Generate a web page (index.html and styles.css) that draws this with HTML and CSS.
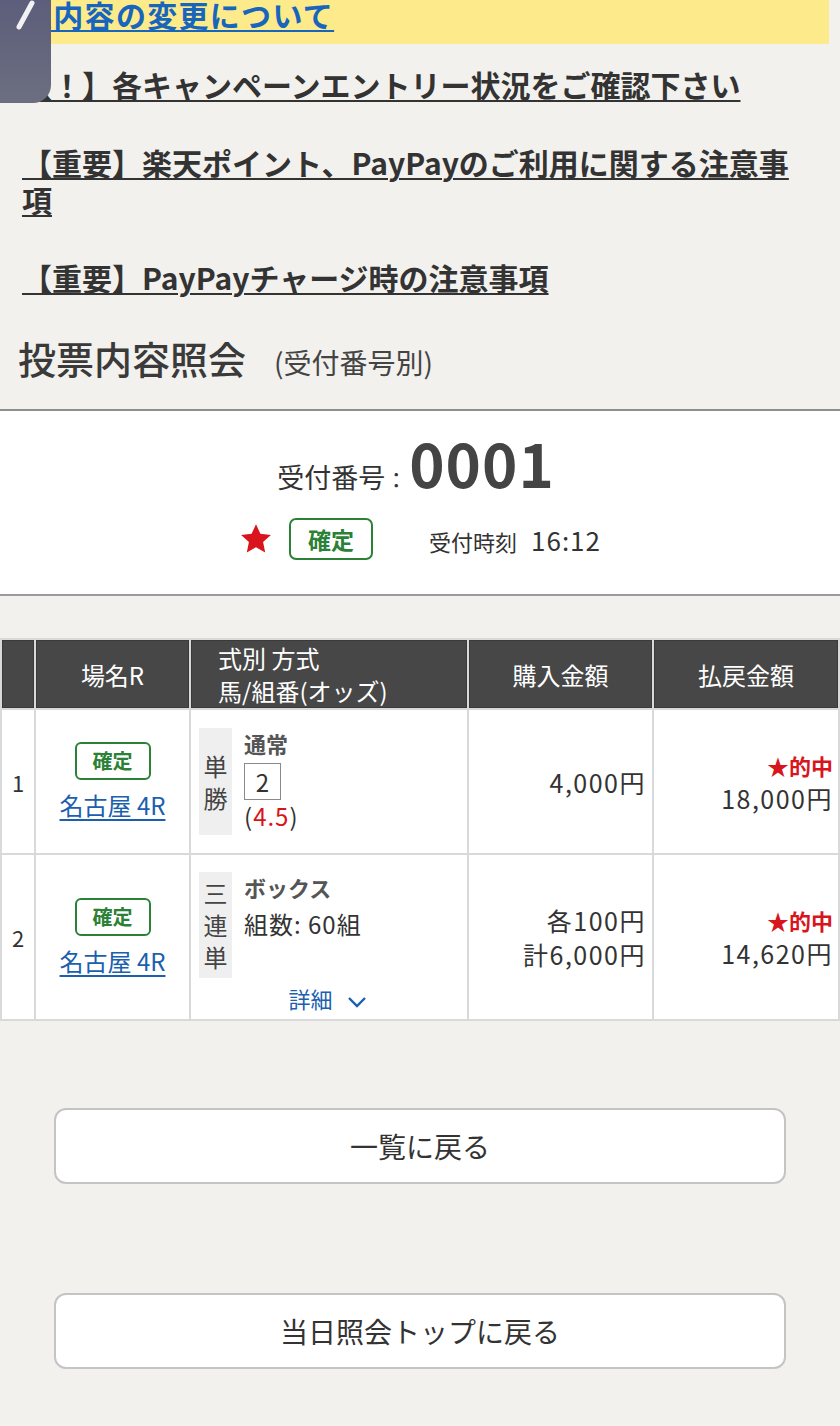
FILE: index.html
```html
<!DOCTYPE html>
<html lang="ja">

<head>
    <meta charset="UTF-8">
    <meta name="viewport" content="width=device-width, initial-scale=1.0">
    <title>投票内容照会</title>
    <link rel="stylesheet" href="styles.css">
</head>

<body>

    <div class="back-tab">
        <svg width="51" height="40" viewBox="0 0 51 40">
            <line x1="19" y1="27" x2="32" y2="3" stroke="#fff" stroke-width="5" stroke-linecap="round" opacity="0.92" />
        </svg>
    </div>

    <div class="notice-bar">
        <a href="#" class="notice-bar-link">入内容の変更について</a>
    </div>

    <div class="notices">
        <a href="#" class="notice">【！】各キャンペーンエントリー状況をご確認下さい</a>
        <a href="#" class="notice">【重要】楽天ポイント、PayPayのご利用に関する注意事項</a>
        <a href="#" class="notice">【重要】PayPayチャージ時の注意事項</a>
    </div>

    <h1 class="page-title">投票内容照会<span class="page-sub">(受付番号別)</span></h1>

    <div class="receipt">
        <div class="receipt-no">
            <span class="receipt-label">受付番号</span>
            <span class="receipt-colon">：</span>
            <span class="receipt-num">0001</span>
        </div>
        <div class="receipt-info">
            <svg class="big-star" width="34" height="34" viewBox="0 0 24 24">
                <polygon points="12,1.5 15.1,8.3 22.5,9.1 17,14.1 18.5,21.5 12,17.8 5.5,21.5 7,14.1 1.5,9.1 8.9,8.3" fill="#d8141c" />
            </svg>
            <span class="status-big">確定</span>
            <span class="receipt-time"><span class="time-label">受付時刻</span><span class="time-val">16:12</span></span>
        </div>
    </div>

    <table class="bets">
        <thead>
            <tr>
                <th class="col-no"></th>
                <th class="col-race">場名R</th>
                <th class="col-type">式別 方式<br>馬/組番(オッズ)</th>
                <th class="col-buy">購入金額</th>
                <th class="col-pay">払戻金額</th>
            </tr>
        </thead>
        <tbody>
            <tr class="row-1">
                <td class="col-no">1</td>
                <td class="col-race">
                    <span class="status">確定</span>
                    <a href="#" class="race-link">名古屋 4R</a>
                </td>
                <td class="col-type">
                    <div class="bet">
                        <div class="bet-kind"><span>単</span><span>勝</span></div>
                        <div class="bet-body">
                            <div class="bet-method">通常</div>
                            <div class="horse-box">2</div>
                            <div class="odds">(<span class="odds-val">4.5</span>)</div>
                        </div>
                    </div>
                </td>
                <td class="col-buy">4,000円</td>
                <td class="col-pay">
                    <div class="hit">★的中</div>
                    <div>18,000円</div>
                </td>
            </tr>
            <tr class="row-2">
                <td class="col-no">2</td>
                <td class="col-race">
                    <span class="status">確定</span>
                    <a href="#" class="race-link">名古屋 4R</a>
                </td>
                <td class="col-type">
                    <div class="bet">
                        <div class="bet-kind"><span>三</span><span>連</span><span>単</span></div>
                        <div class="bet-body">
                            <div class="bet-method">ボックス</div>
                            <div class="bet-count">組数: 60組</div>
                        </div>
                    </div>
                    <a href="#" class="detail">詳細
                        <svg width="20" height="12" viewBox="0 0 20 12">
                            <polyline points="2,2 10,10 18,2" fill="none" stroke="#1b5fae" stroke-width="2.4" />
                        </svg>
                    </a>
                </td>
                <td class="col-buy">
                    <div>各100円</div>
                    <div>計6,000円</div>
                </td>
                <td class="col-pay">
                    <div class="hit">★的中</div>
                    <div>14,620円</div>
                </td>
            </tr>
        </tbody>
    </table>

    <div class="actions">
        <a href="#" class="btn">一覧に戻る</a>
        <a href="#" class="btn">当日照会トップに戻る</a>
    </div>

</body>

</html>
```

FILE: styles.css
```css
body {
    margin: 0;
    padding: 0;
    background: #f2f1ed;
    font-family: "Noto Sans CJK JP", "Noto Sans", sans-serif;
    color: #333;
}

* {
    box-sizing: border-box;
}

a {
    color: inherit;
}

.back-tab {
    position: absolute;
    top: 0;
    left: 0;
    width: 51px;
    height: 103px;
    border-bottom-right-radius: 18px;
    background: linear-gradient(180deg, #5c5e7b, #6c6e80);
}

.back-tab svg {
    display: block;
}

/* yellow notice */
.notice-bar {
    height: 44px;
    margin-right: 11px;
    padding: 0 22px;
    background: #fdeb8b;
}

.notice-bar-link {
    display: block;
    font-size: 30px;
    font-weight: 700;
    line-height: 28px;
    letter-spacing: 1.3px;
    color: #1765bd;
    text-decoration-thickness: 2px;
    text-underline-offset: 3px;
}

.notices {
    padding: 22px 40px 0 22px;
}

.notice {
    display: block;
    margin-bottom: 41px;
    font-size: 30px;
    font-weight: 700;
    line-height: 37px;
    color: #333;
    text-decoration-thickness: 2px;
    text-underline-offset: 3px;
}

.page-title {
    display: flex;
    align-items: baseline;
    height: 72px;
    margin: 0;
    padding: 0 18px;
    font-size: 38px;
    font-weight: 500;
    line-height: 42px;
    color: #3a3a3a;
}

.page-sub {
    margin-left: 28px;
    font-size: 28px;
    font-weight: 400;
    color: #444;
}

/* receipt */
.receipt {
    background: #fff;
    border-top: 2px solid #8e8e8e;
    border-bottom: 2px solid #9b9b9b;
    padding: 19px 0 34px;
}

.receipt-no {
    display: flex;
    justify-content: center;
    align-items: baseline;
    height: 64px;
    line-height: 64px;
    padding-right: 8px;
}

.receipt-label {
    font-size: 27px;
}

.receipt-colon {
    font-size: 22px;
    margin-right: 2px;
}

.receipt-num {
    font-size: 60px;
    font-weight: 700;
    color: #444;
    letter-spacing: 1px;
}

.receipt-info {
    display: flex;
    justify-content: center;
    align-items: center;
    height: 42px;
    margin-top: 24px;
}

.big-star {
    margin-right: 16px;
}

.status-big {
    width: 84px;
    height: 42px;
    border: 2px solid #2b8135;
    border-radius: 7px;
    color: #2b8135;
    font-size: 23px;
    font-weight: 700;
    line-height: 38px;
    text-align: center;
    margin-right: 56px;
}

.time-label {
    font-size: 22px;
    margin-right: 14px;
}

.time-val {
    font-size: 26px;
    letter-spacing: 1px;
}

/* bets table */
.bets {
    width: 840px;
    margin-top: 42px;
    border-spacing: 2px;
    background: #d9d9d9;
    font-size: 24px;
}

.bets th {
    height: 68px;
    padding: 0;
    background: #474747;
    border: 1px solid #3a3a3a;
    color: #fff;
    font-weight: 400;
    font-size: 24px;
    line-height: 33px;
}

.bets td {
    padding: 0;
    background: #fff;
    vertical-align: middle;
}

.row-1 td {
    height: 143px;
}

.row-2 td {
    height: 164px;
}

.col-no {
    width: 32px;
    text-align: center;
    font-size: 22px;
}

.col-race {
    width: 153px;
    text-align: center;
}

.bets th.col-type {
    width: 276px;
    text-align: left;
    padding-left: 26px;
}

.col-buy {
    width: 183px;
}

.col-pay {
    width: 184px;
}

.bets td.col-buy {
    text-align: right;
    padding-right: 6px;
    font-size: 25px;
    letter-spacing: 1.5px;
    line-height: 34px;
}

.bets td.col-pay {
    text-align: right;
    padding-right: 5px;
    font-size: 25px;
    letter-spacing: 1.5px;
    line-height: 33px;
}

.status {
    display: inline-block;
    width: 76px;
    height: 38px;
    border: 2px solid #2b8135;
    border-radius: 6px;
    color: #2b8135;
    font-size: 20px;
    font-weight: 700;
    line-height: 34px;
}

.race-link {
    display: block;
    margin-top: 8px;
    color: #1b5fae;
    line-height: 34px;
    text-underline-offset: 4px;
}

.bets td.col-type {
    vertical-align: top;
    padding: 18px 0 0 8px;
}

.row-2 td.col-type {
    padding-top: 17px;
}

.bet {
    display: flex;
    gap: 12px;
}

.bet-kind {
    display: flex;
    flex-direction: column;
    justify-content: center;
    width: 33px;
    padding: 5px 0;
    background: #efefef;
    text-align: center;
    line-height: 32px;
    color: #444;
}

.row-1 .bet-kind {
    height: 107px;
}

.bet-body {
    line-height: 30px;
}

.bet-method {
    font-size: 22px;
    font-weight: 700;
    color: #555;
}

.bet-count {
    margin-top: 7px;
    letter-spacing: 1px;
}

.horse-box {
    width: 37px;
    height: 37px;
    margin-top: 5px;
    border: 1px solid #8a8a8a;
    text-align: center;
    line-height: 35px;
}

.odds {
    margin-top: 1px;
    letter-spacing: 1px;
}

.odds-val {
    color: #d8141c;
}

.detail {
    display: block;
    margin-top: 5px;
    padding-right: 10px;
    text-align: center;
    font-size: 22px;
    line-height: 30px;
    color: #1b5fae;
    text-decoration: none;
}

.detail svg {
    margin-left: 10px;
}

.hit {
    color: #d8141c;
    font-weight: 700;
    font-size: 22px;
    letter-spacing: 0;
}

/* buttons */
.actions {
    padding: 87px 54px 56px;
    display: flex;
    flex-direction: column;
    gap: 109px;
}

.btn {
    display: block;
    height: 76px;
    background: #fff;
    border: 2px solid #c4c4c4;
    border-radius: 12px;
    font-size: 28px;
    line-height: 72px;
    text-align: center;
    color: #333;
    text-decoration: none;
}
```
